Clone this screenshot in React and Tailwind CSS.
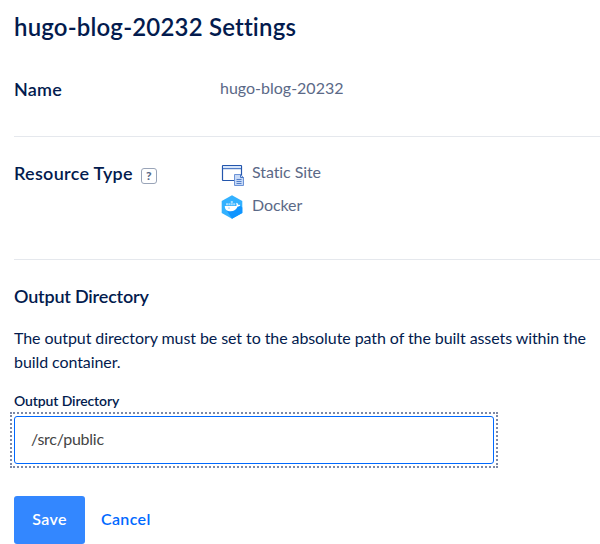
function SiteIcon() {
  return (
    <svg className="block h-6 w-6" viewBox="0 0 24 24" fill="none">
      <rect x="2.500" y="3.500" width="19" height="15" rx="0.500" fill="#fff" stroke="#2456ac" strokeWidth="1.200" />
      <path d="M3 4h18v2.500H3z" fill="#d8e7fb" />
      <path d="M3 6.700h18" stroke="#2f62b8" />
      <path d="M14.500 12.500h6l3 3v8h-9z" fill="#c6d9f7" stroke="#6c93d6" />
      <path d="M20.500 12.500v3h3" stroke="#4674c2" />
      <path d="M16.500 17.500h5M16.500 19.500h5M16.500 21.500h5" stroke="#4674c2" strokeWidth="0.900" />
    </svg>
  );
}

function DockerIcon() {
  return (
    <svg className="block h-6 w-6" viewBox="0 0 24 24">
      <path d="M12 .3 22.300 6v12L12 23.800 1.700 18V6z" fill="#33b1ff" />
      <path d="M18.500 9.500 22.300 12.500V18L12 23.800 6.800 15.500z" fill="#0f94ff" />
      <path d="M6 8.300h2v2H6zM8.400 8.300h2v2h-2zM10.800 8.300h2v2h-2zM13.200 8.300h2v2h-2zM10.800 6h2v2h-2z" fill="#a5dcff" />
      <path d="M4.800 11h11.400c.5-.8.4-1.700-.1-2.500l.8-.7c.8.500 1.200 1.200 1.300 2 .8-.1 1.500 0 2 .4-.5 1-1.400 1.400-2.500 1.400-1.300 3.200-3.600 4.700-7.100 4.700-3.700 0-5.900-1.700-5.800-5.300z" fill="#fff" />
      <circle cx="9" cy="13" r=".5" fill="#168fff" />
    </svg>
  );
}

export default function App() {
  return (
    <main className="h-[544px] w-[600px] overflow-hidden bg-white pl-[14px] font-['Lato','Open_Sans',sans-serif] text-[#031b4e] [font-variant-ligatures:none]">
      <h1 className="pt-[11px] text-[24px] leading-8 font-semibold tracking-[0.18px]">hugo-blog-20232 Settings</h1>

      <section className="flex h-[94px] border-b border-[#e5e8ed] pt-[33px]">
        <h2 className="w-[206px] pt-px text-[18px] leading-6 font-semibold tracking-[0.2px]">Name</h2>
        <p className="text-[16px] leading-6 text-[#5b6987]">hugo-blog-20232</p>
      </section>

      <section className="flex h-[123px] border-b border-[#e5e8ed] pt-[23px]">
        <div className="flex h-6 w-[206px] items-center gap-2 pt-[2px]">
          <h2 className="text-[18px] leading-6 font-semibold tracking-[0.28px]">Resource Type</h2>
          <span className="mt-[5px] flex h-4 w-4 items-center justify-center rounded-[3px] border border-[#99a4b8] text-[12px] leading-none font-black text-[#5b6987]">?</span>
        </div>
        <ul className="flex flex-col gap-[9px] text-[16px] leading-6 tracking-[-0.08px] text-[#5b6987]">
          <li className="flex gap-2"><span className="pt-[2px]"><SiteIcon /></span><span>Static Site</span></li>
          <li className="-mt-[2px] flex gap-2"><span className="pt-[2px]"><DockerIcon /></span><span>Docker</span></li>
        </ul>
      </section>

      <section>
        <h2 className="pt-[24px] text-[18px] leading-6 font-semibold tracking-[-0.19px]">Output Directory</h2>
        <p className="pt-[18px] text-[16px] leading-6 tracking-[-0.08px] whitespace-nowrap">
          The output directory must be set to the absolute path of the built assets within the<br />
          build container.
        </p>
        <label htmlFor="output" className="mt-[17px] block text-[14px] leading-5 font-semibold tracking-[-0.12px]">Output Directory</label>
        <div className="mt-[5px] h-12 w-[480px] outline-2 outline-offset-2 outline-dotted outline-[#7c88a6]">
          <input id="output" defaultValue="/src/public" className="block h-12 w-full rounded-[3px] border border-[#0069ff] px-4 pb-[3px] text-[16px] tracking-[-0.25px] text-[#444] outline-none" />
        </div>
        <div className="mt-8 flex h-12 items-center gap-4 text-[16px] font-semibold tracking-[0.35px]">
          <button className="h-12 w-[71px] rounded-[3px] bg-[#3387ff] pb-[2px] text-white">Save</button>
          <a className="pb-[2px] text-[#0069ff]">Cancel</a>
        </div>
      </section>
    </main>
  );
}
